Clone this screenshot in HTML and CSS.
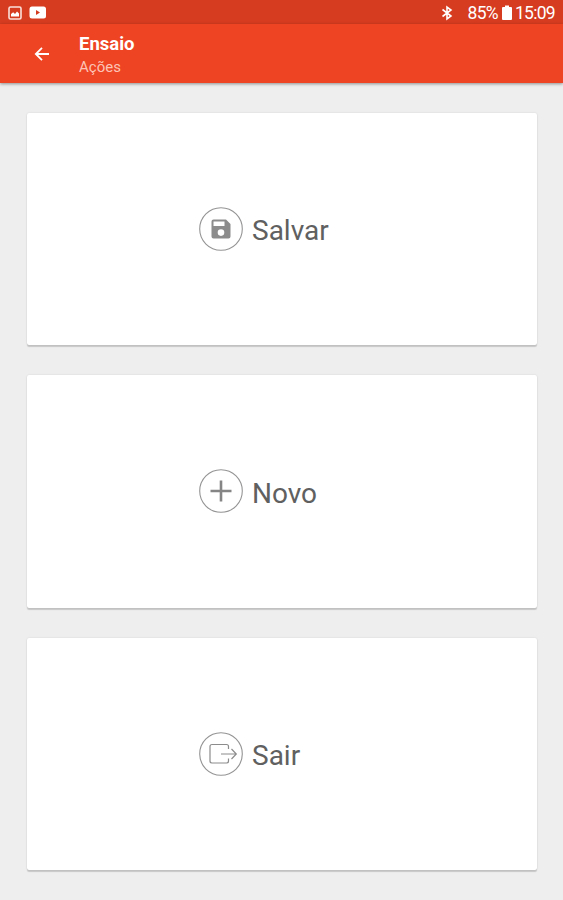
FILE: index.html
```html
<!DOCTYPE html>
<html lang="pt-BR">
<head>
  <meta charset="UTF-8">
  <meta name="viewport" content="width=device-width, initial-scale=1.0">
  <title>Ensaio</title>
  <link rel="stylesheet" href="styles.css">
</head>
<body>
  <!--status bar-->
  <div class="statusbar">
    <svg class="picture" width="14" height="14" viewBox="0 0 14 14">
      <rect x="1" y="1" width="12" height="12" rx="1.5" fill="none" stroke="#fbe0da" stroke-width="1.6"/>
      <path d="M3 10.500V8L5.200 6.300L7 8L9 5.500L11 7.500V10.500Z" fill="#fff"/>
    </svg>
    <svg class="video" width="18" height="13" viewBox="0 0 18 13">
      <rect x="0.500" y="0.500" width="16.500" height="12" rx="2.500" fill="#fff"/>
      <path d="M7 4L11 6.500L7 9Z" fill="#d43c20"/>
    </svg>
    <svg class="bluetooth" width="12" height="16" viewBox="0 0 12 16">
      <path d="M1.500 4.500L10 11L6 14V2L10 5L1.500 11.500" fill="none" stroke="#fff" stroke-width="1.600"/>
    </svg>
    <span class="percent">85%</span>
    <svg class="battery" width="10" height="15" viewBox="0 0 10 15">
      <path d="M3 0.500H7V2H9Q10 2 10 3V14Q10 15 9 15H1Q0 15 0 14V3Q0 2 1 2H3Z" fill="#fff"/>
    </svg>
    <span class="clock">15:09</span>
  </div>

  <!--app bar-->
  <header class="appbar">
    <svg class="back" width="16" height="16" viewBox="0 0 16 16">
      <path d="M15 8H2M8 1.800L1.800 8L8 14.200" fill="none" stroke="#fff" stroke-width="1.800"/>
    </svg>
    <div class="titles">
      <h1>Ensaio</h1>
      <p>Ações</p>
    </div>
  </header>

  <!--actions-->
  <main class="actions">
    <div class="card">
      <svg class="icon" width="44" height="44" viewBox="0 0 44 44">
        <circle cx="22" cy="22" r="21.300" fill="none" stroke="#949494" stroke-width="1.100"/>
        <path fill-rule="evenodd" d="M14.500 12.500H27L31.500 17V29.500Q31.500 31.500 29.500 31.500H14.500Q12.500 31.500 12.500 29.500V14.500Q12.500 12.500 14.500 12.500ZM14.500 14.500V19H25.500V14.500ZM22 22.300A3.300 3.300 0 1 0 22 28.900A3.300 3.300 0 1 0 22 22.300Z" fill="#8c8c8c"/>
      </svg>
      <span class="label">Salvar</span>
    </div>
    <div class="card">
      <svg class="icon" width="44" height="44" viewBox="0 0 44 44">
        <circle cx="22" cy="22" r="21.300" fill="none" stroke="#949494" stroke-width="1.100"/>
        <path d="M22 11.500V32.500M11.500 22H32.500" fill="none" stroke="#858585" stroke-width="2.600"/>
      </svg>
      <span class="label">Novo</span>
    </div>
    <div class="card">
      <svg class="icon" width="44" height="44" viewBox="0 0 44 44">
        <circle cx="22" cy="22" r="21.300" fill="none" stroke="#949494" stroke-width="1.100"/>
        <path d="M29.500 17V14.500Q29.500 12.500 27.500 12.500H13Q11 12.500 11 14.500V29Q11 31 13 31H27.500Q29.500 31 29.500 29V26.500M22 22H37M32.500 17L37.300 22L32.500 27" fill="none" stroke="#8c8c8c" stroke-width="1.200"/>
      </svg>
      <span class="label">Sair</span>
    </div>
  </main>
</body>
</html>
```
FILE: styles.css
```css
*{box-sizing:border-box;}
body{
  margin:0;
  height:900px;
  overflow:hidden;
  background-color:#eee;
  font-family:Roboto, sans-serif;
}

/*status bar*/
.statusbar{
  display:flex;
  align-items:center;
  height:24px;
  padding:1px 8px 0 8px;
  background-color:#d63c20;
  color:#fff;
  font-size:17.5px;
  letter-spacing:-0.7px;
}
.video{margin-left:7px;}
.bluetooth{margin-left:auto;}
.percent{margin-left:15px;}
.battery{margin:0 3px 0 4px;}

/*app bar*/
.appbar{
  display:flex;
  height:59px;
  padding-left:34px;
  background-color:#ef4423;
  color:#fff;
  box-shadow:0 1px 3px rgba(0,0,0,0.4);
}
.back{margin-top:22px;}
.titles{margin:9px 0 0 29px;}
.titles h1{
  margin:0;
  font-size:18.5px;
  line-height:22px;
  font-weight:700;
}
.titles p{
  margin:3px 0 0;
  font-size:15px;
  line-height:18px;
  color:#fcc3b6;
}

/*cards*/
.actions{
  display:flex;
  flex-direction:column;
  gap:30px;
  padding:29.5px 26px 0 26.5px;
}
.card{
  display:flex;
  align-items:center;
  height:232.5px;
  padding-left:172px;
  border-radius:2px;
  background-color:#fff;
  box-shadow:0 1.5px 1px rgba(0,0,0,0.16), 0 0 2px rgba(0,0,0,0.12);
}
.label{
  margin-left:9.5px;
  padding-top:5px;
  font-size:28px;
  line-height:34px;
  color:#606060;
}
```
